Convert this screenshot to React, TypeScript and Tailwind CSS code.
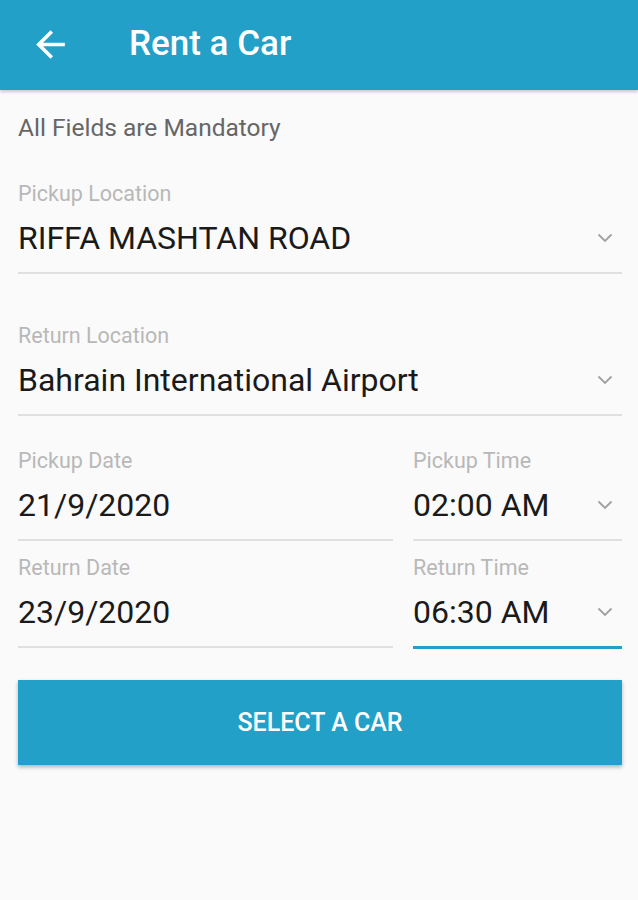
import { ReactNode } from 'react'

const Chevron = () => (
  <svg width="16" height="10" viewBox="0 0 16 10" className="shrink-0">
    <path d="M1.5 1.5l6.5 6.5 6.5-6.5" fill="none" stroke="#a0a0a0" strokeWidth="1.8" />
  </svg>
)

const Field = ({
  label,
  value,
  select,
  active,
  className,
}: {
  label: string
  value: ReactNode
  select?: boolean
  active?: boolean
  className?: string
}) => (
  <div className={className}>
    <div className="h-[24px] text-[21.5px] leading-[24px] text-[#b8b8b8]">{label}</div>
    <div
      className={`mt-[14px] flex items-center justify-between pb-[16px] ${
        active ? 'border-b-[3px] border-[#22a0c8]' : 'border-b-2 border-[#e0e0e0]'
      }`}
    >
      <span className="text-[32px] leading-[36px] text-[#1a1a1a]">{value}</span>
      {select && (
        <span className="mr-[9px]">
          <Chevron />
        </span>
      )}
    </div>
  </div>
)

export default function App() {
  return (
    <div className="min-h-[900px] w-[638px] bg-[#fafafa] font-['Roboto',sans-serif]">
      <div className="relative z-10 flex h-[90px] items-center bg-[#22a0c8] shadow-[0_2px_3px_rgba(0,0,0,0.2)]">
        <svg width="43" height="43" viewBox="0 0 24 24" className="ml-[29px] -mt-[2px]">
          <path
            d="M20 11H7.83l5.59-5.59L12 4l-8 8 8 8 1.41-1.41L7.83 13H20v-2z"
            fill="#ffffff"
          />
        </svg>
        <div className="ml-[57px] -mt-[2px] text-[35px] font-medium text-white">Rent a Car</div>
      </div>

      <div className="pl-[18px] pr-[16px]">
        <div className="mt-[24px] h-[28px] text-[24.5px] leading-[28px] text-[#666666]">
          All Fields are Mandatory
        </div>

        <Field className="mt-[40px]" label="Pickup Location" value="RIFFA MASHTAN ROAD" select />
        <Field className="mt-[50px]" label="Return Location" value="Bahrain International Airport" select />

        <div className="mt-[33px] grid grid-cols-[375px_1fr] gap-x-[20px] gap-y-[15px]">
          <Field label="Pickup Date" value="21/9/2020" />
          <Field label="Pickup Time" value="02:00 AM" select />
          <Field label="Return Date" value="23/9/2020" />
          <Field label="Return Time" value="06:30 AM" select active />
        </div>

        <button className="mt-[31px] flex h-[85px] w-full items-center justify-center bg-[#22a0c8] text-[25px] font-medium text-white shadow-[0_2px_4px_rgba(0,0,0,0.3)]">
          SELECT A CAR
        </button>
      </div>
    </div>
  )
}
